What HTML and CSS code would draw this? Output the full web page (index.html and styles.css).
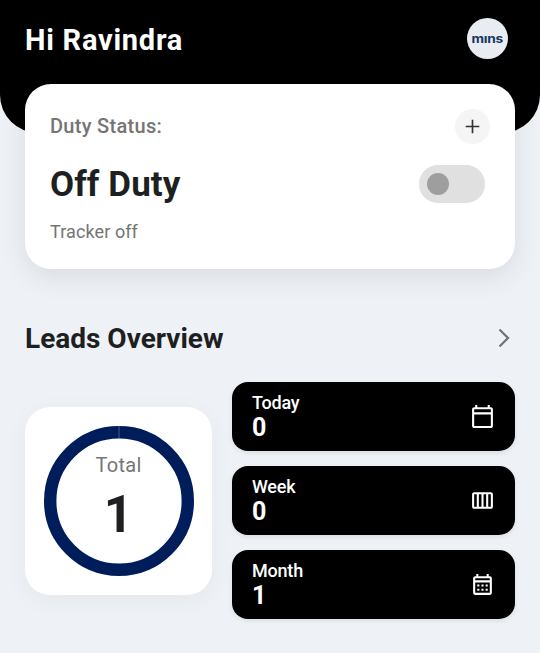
FILE: index.html
```html
<!DOCTYPE html>
<html lang="en">
<head>
<meta charset="utf-8">
<title>Dashboard</title>
<link rel="stylesheet" href="styles.css">
</head>
<body>
<header class="header">
  <h1 class="greeting">Hi Ravindra</h1>
  <div class="avatar"><span class="avatar-text">mıns</span></div>
</header>
<main class="content">
  <section class="duty">
    <div class="row">
      <span class="duty-label">Duty Status:</span>
      <button class="add" aria-label="Add"><svg width="25" height="25" viewBox="0 0 24 24"><path d="M12 5.5v13M5.5 12h13" fill="none" stroke="#333" stroke-width="1.6"/></svg></button>
    </div>
    <div class="row status-row">
      <strong class="status">Off Duty</strong>
      <div class="switch"><span class="knob"></span></div>
    </div>
    <p class="tracker">Tracker off</p>
  </section>
  <div class="heading">
    <h2 class="title">Leads Overview</h2>
    <svg class="chevron" width="12" height="20" viewBox="0 0 12 20"><path d="M1.5 1.5L10 10l-8.500 8.500" fill="none" stroke="#757575" stroke-width="2.300"/></svg>
  </div>
  <section class="overview">
    <div class="total">
      <div class="ring">
        <svg class="ring-shape" viewBox="0 0 150 150"><circle cx="75" cy="75" r="68.800" fill="none" stroke="#001d5b" stroke-width="12.400"/><path d="M75 0v12.400" stroke="#7583a5" stroke-width=".6"/></svg>
        <span class="total-label">Total</span>
        <strong class="total-value">1</strong>
      </div>
    </div>
    <div class="stats">
      <article class="stat">
        <div><div class="stat-label">Today</div><div class="stat-value">0</div></div>
        <svg class="icon" viewBox="0 0 24 24"><path d="M20 3h-1V1h-2v2H7V1H5v2H4c-1.100 0-2 .9-2 2v16c0 1.100.9 2 2 2h16c1.100 0 2-.9 2-2V5c0-1.100-.9-2-2-2zm0 2v3H4V5h16zM4 21V10h16v11H4z"/></svg>
      </article>
      <article class="stat">
        <div><div class="stat-label">Week</div><div class="stat-value">0</div></div>
        <svg class="icon" viewBox="0 0 24 24"><path d="M20 4H4c-1.100 0-2 .9-2 2v12c0 1.100.9 2 2 2h16c1.100 0 2-.9 2-2V6c0-1.100-.9-2-2-2zM13 6h2.500v12H13V6zm-2 12H8.500V6H11v12zM4 6h2.500v12H4V6zm16 12h-2.500V6H20v12z"/></svg>
      </article>
      <article class="stat">
        <div><div class="stat-label">Month</div><div class="stat-value">1</div></div>
        <svg class="icon" viewBox="0 0 24 24"><path d="M19 4h-1V2h-2v2H8V2H6v2H5c-1.110 0-2 .9-2 2v14c0 1.100.89 2 2 2h14c1.100 0 2-.9 2-2V6c0-1.100-.9-2-2-2zm0 16H5V10h14v10zm0-12H5V6h14v2zM7 12h2v2H7zm4 0h2v2h-2zm4 0h2v2h-2zM7 16h2v2H7zm4 0h2v2h-2zm4 0h2v2h-2z"/></svg>
      </article>
    </div>
  </section>
</main>
</body>
</html>
```
FILE: styles.css
```css
* { box-sizing: border-box; }
body {
  margin: 0;
  height: 653px;
  overflow: hidden;
  background: #eef1f6;
  font-family: Roboto, sans-serif;
  color: #1e1f21;
}
h1, h2, p { margin: 0; }
.header {
  height: 133px;
  padding: 18px 32px 0 25px;
  display: flex;
  align-items: flex-start;
  justify-content: space-between;
  background: #000;
  border-radius: 0 0 38px 38px;
}
.greeting {
  color: #fff;
  font-size: 29px;
  line-height: 44px;
  font-weight: 700;
  letter-spacing: .75px;
}
.avatar {
  width: 41px;
  height: 41px;
  border-radius: 50%;
  background: #e9edf2;
  display: grid;
  place-items: center;
}
.avatar-text {
  color: #17375f;
  font: 700 12.5px/18px Inter, sans-serif;
  letter-spacing: -.3px;
  transform: scaleX(1.1);
}
.content { padding: 0 25px; margin-top: -49px; }
.duty {
  height: 185px;
  padding: 25px 25px 0;
  background: #fff;
  border-radius: 26px;
  box-shadow: 0 8px 28px rgba(0, 0, 0, .09);
}
.row { display: flex; align-items: center; justify-content: space-between; }
.duty-label { color: #757575; font-size: 20px; font-weight: 500; letter-spacing: .3px; padding-bottom: 2px; }
.add {
  width: 35px;
  height: 35px;
  padding: 0;
  border: 0;
  border-radius: 50%;
  background: #f5f5f5;
  display: grid;
  place-items: center;
}
.status-row { height: 42px; margin-top: 19px; padding-right: 5px; }
.status { font-size: 35px; font-weight: 700; line-height: 42px; letter-spacing: .1px; padding-top: 1px; }
.switch {
  width: 66px;
  height: 38px;
  padding-left: 8px;
  border-radius: 19px;
  background: #e0e0e0;
  display: flex;
  align-items: center;
}
.knob { width: 22px; height: 22px; border-radius: 50%; background: #9e9e9e; }
.tracker { margin-top: 16px; color: #757575; font-size: 18px; line-height: 22px; letter-spacing: .1px; }
.heading {
  height: 40px;
  margin-top: 49px;
  padding-right: 5px;
  display: flex;
  align-items: center;
  justify-content: space-between;
}
.title { font-size: 28px; font-weight: 700; letter-spacing: 0; }
.overview {
  margin-top: 24px;
  display: grid;
  grid-template-columns: 187px 283px;
  gap: 20px;
  align-items: center;
}
.total {
  height: 188px;
  border-radius: 25px;
  background: #fff;
  display: grid;
  place-items: center;
  box-shadow: 0 5px 24px rgba(0, 0, 0, .045);
}
.ring {
  width: 150px;
  height: 150px;
  display: grid;
  grid-template: 27px 24px 66px 1fr / 1fr;
  justify-items: center;
}
.ring-shape { grid-area: 1 / 1 / 5 / 2; width: 150px; height: 150px; }
.total-label { grid-area: 2 / 1; color: #757575; font-size: 20px; line-height: 24px; letter-spacing: .3px; }
.total-value { grid-area: 3 / 1; font-size: 51px; font-weight: 700; line-height: 76px; }
.stats { display: grid; gap: 15px; }
.stat {
  height: 69px;
  padding: 10px 20px 0;
  border-radius: 16px;
  background: #000;
  color: #fff;
  display: flex;
  justify-content: space-between;
  box-shadow: 0 2px 5px rgba(0, 0, 0, .08);
}
.stat-label { font-size: 18px; line-height: 22px; font-weight: 500; letter-spacing: -.2px; }
.stat-value { font-size: 25px; line-height: 28px; font-weight: 700; }
.icon { width: 25px; height: 25px; margin-top: 12px; fill: #fff; }
```
